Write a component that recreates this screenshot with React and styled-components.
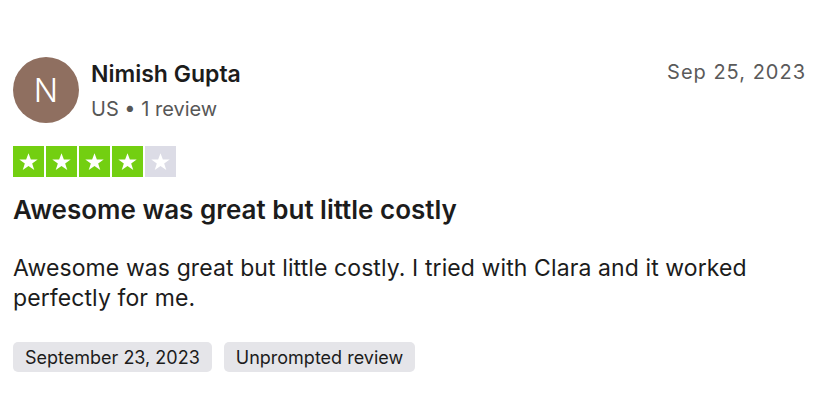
import React from 'react';
import styled, { createGlobalStyle } from 'styled-components';

const GlobalStyle = createGlobalStyle`
    body {
        margin: 0;
        background: #ffffff;
        font-family: Inter, "Noto Sans", sans-serif;
        color: #1c1c1c;
    }
`;

const Card = styled.article`
    padding: 57px 16px 0 13px;
`;

const Header = styled.div`
    display: flex;
    align-items: flex-start;
    justify-content: space-between;
`;

const Consumer = styled.div`
    display: flex;
    align-items: center;
    gap: 12px;
`;

const Avatar = styled.div`
    width: 66px;
    height: 66px;
    border-radius: 50%;
    background-color: #8f6f60;
    color: #fff;
    display: flex;
    align-items: center;
    justify-content: center;
    font-size: 32px;
    font-weight: 300;
`;

const Name = styled.div`
    font-size: 23px;
    font-weight: 600;
    line-height: 28px;
    color: #1c1c1c;
`;

const Meta = styled.div`
    font-size: 20px;
    line-height: 24px;
    margin-top: 9px;
    color: #575757;
`;

const DateText = styled.time`
    font-size: 20px;
    line-height: 24px;
    margin-top: 3px;
    letter-spacing: 1px;
    color: #5a5a5a;
`;

const Stars = styled.div`
    display: flex;
    gap: 2px;
    margin-top: 23px;
`;

const StarBox = styled.div`
    width: 31px;
    height: 31px;
    background-color: ${(p) => (p.$on ? '#73cf11' : '#dcdce6')};
    display: flex;
    align-items: center;
    justify-content: center;
`;

const Title = styled.h2`
    margin: 17px 0 0;
    font-size: 26px;
    font-weight: 600;
    line-height: 32px;
    color: #1c1c1c;
`;

const Body = styled.p`
    margin: 27px 0 0;
    font-size: 23px;
    line-height: 30px;
    letter-spacing: 0.1px;
    color: #1c1c1c;
`;

const Tags = styled.div`
    display: flex;
    gap: 12px;
    margin-top: 29px;
`;

const Tag = styled.span`
    height: 30px;
    padding: 0 12px;
    display: flex;
    align-items: center;
    border-radius: 5px;
    background-color: #e5e5e9;
    font-size: 18px;
    color: #1c1c1c;
`;

const Star = () => (
    <svg width="21" height="21" viewBox="0 0 24 24">
        <path d="M12 2.5l2.7 7.3h7.8l-6.3 4.6 2.4 7.4L12 17.2l-6.6 4.6 2.4-7.4-6.3-4.6h7.8z" fill="#fff" />
    </svg>
);

const App = () => {
    const rating = 4;
    return (
        <>
            <GlobalStyle />
            <Card>
                <Header>
                    <Consumer>
                        <Avatar>N</Avatar>
                        <div>
                            <Name>Nimish Gupta</Name>
                            <Meta>US • 1 review</Meta>
                        </div>
                    </Consumer>
                    <DateText>Sep 25, 2023</DateText>
                </Header>
                <Stars>
                    {[1, 2, 3, 4, 5].map((n) => (
                        <StarBox key={n} $on={n <= rating}>
                            <Star />
                        </StarBox>
                    ))}
                </Stars>
                <Title>Awesome was great but little costly</Title>
                <Body>Awesome was great but little costly. I tried with Clara and it worked perfectly for me.</Body>
                <Tags>
                    <Tag>September 23, 2023</Tag>
                    <Tag>Unprompted review</Tag>
                </Tags>
            </Card>
        </>
    );
};

export default App;
